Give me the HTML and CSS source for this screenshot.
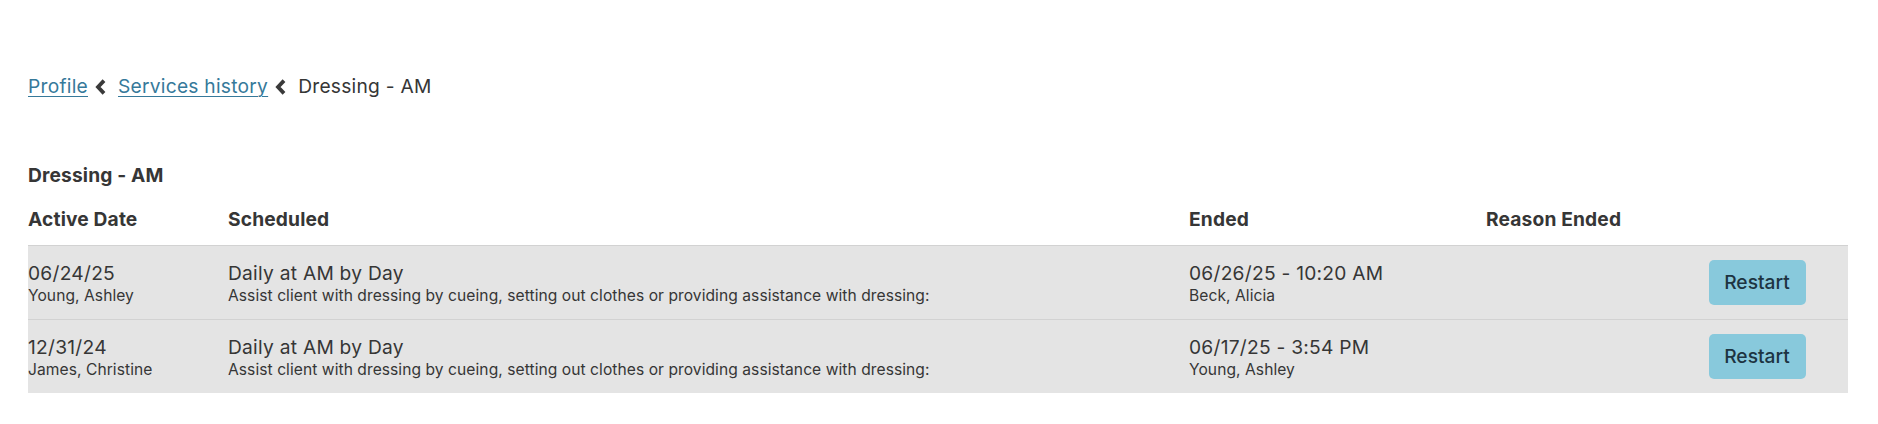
FILE: index.html
```html
<!DOCTYPE html>
<html lang="en">
<head>
<meta charset="utf-8">
<title>Dressing - AM</title>
<link rel="stylesheet" href="styles.css">
</head>
<body>
<div class="page">
  <nav class="crumbs">
    <a href="#" class="crumb-link">Profile</a>
    <svg class="chev" viewBox="0 0 11 16" width="11" height="16"><path d="M9 1.6 L3 8 L9 14.4"/></svg>
    <a href="#" class="crumb-link">Services history</a>
    <svg class="chev" viewBox="0 0 11 16" width="11" height="16"><path d="M9 1.6 L3 8 L9 14.4"/></svg>
    <span class="crumb-current">Dressing - AM</span>
  </nav>

  <h2 class="title">Dressing - AM</h2>

  <div class="table">
    <div class="row head">
      <div class="cell">Active Date</div>
      <div class="cell">Scheduled</div>
      <div class="cell">Ended</div>
      <div class="cell">Reason Ended</div>
      <div class="cell"></div>
    </div>
    <div class="row body">
      <div class="cell">
        <div class="main">06/24/25</div>
        <div class="sub">Young, Ashley</div>
      </div>
      <div class="cell">
        <div class="main">Daily at AM by Day</div>
        <div class="sub">Assist client with dressing by cueing, setting out clothes or providing assistance with dressing:</div>
      </div>
      <div class="cell">
        <div class="main">06/26/25 - 10:20 AM</div>
        <div class="sub">Beck, Alicia</div>
      </div>
      <div class="cell"></div>
      <div class="cell action"><button class="btn">Restart</button></div>
    </div>
    <div class="row body">
      <div class="cell">
        <div class="main">12/31/24</div>
        <div class="sub">James, Christine</div>
      </div>
      <div class="cell">
        <div class="main">Daily at AM by Day</div>
        <div class="sub">Assist client with dressing by cueing, setting out clothes or providing assistance with dressing:</div>
      </div>
      <div class="cell">
        <div class="main">06/17/25 - 3:54 PM</div>
        <div class="sub">Young, Ashley</div>
      </div>
      <div class="cell"></div>
      <div class="cell action"><button class="btn">Restart</button></div>
    </div>
  </div>
</div>
</body>
</html>
```
FILE: styles.css
```css
html, body {
  margin: 0;
  padding: 0;
  background: #ffffff;
}

body {
  font-family: Inter, "Noto Sans", "Liberation Sans", sans-serif;
  color: #363636;
  font-size: 19.2px;
  line-height: 23px;
}

.page {
  padding: 75px 30px 0 28px;
}

.crumbs {
  display: flex;
  align-items: center;
  height: 23px;
  letter-spacing: 0.25px;
}

.crumb-link {
  color: #36799a;
  text-decoration: underline;
  text-underline-offset: 3px;
  text-decoration-thickness: 1px;
}

.crumb-current {
  color: #363636;
}

.chev {
  margin: 0 12px 0 7px;
  fill: none;
  stroke: #3a3a3a;
  stroke-width: 3.8;
  stroke-linejoin: miter;
  stroke-linecap: butt;
}

.title {
  margin: 66px 0 0 0;
  font-size: 19.2px;
  line-height: 23px;
  font-weight: 700;
  color: #363636;
  letter-spacing: 0.15px;
}

.table {
  margin-top: 21px;
}

.row {
  display: grid;
  grid-template-columns: 200px 961px 297px 180px 1fr;
}

.row.head {
  font-weight: 700;
  padding-bottom: 14px;
  border-bottom: 1px solid #d2d2d2;
  letter-spacing: 0.15px;
}

.row.body {
  background: #e4e4e4;
  padding: 14px 0;
  align-items: center;
}

.row.body + .row.body {
  border-top: 1px solid #d2d2d2;
}

.main {
  line-height: 25px;
  font-size: 19.2px;
  letter-spacing: 0.25px;
}

.sub {
  font-size: 15.6px;
  line-height: 19px;
  letter-spacing: 0.06px;
}

.action {
  display: flex;
  justify-content: center;
}

.btn {
  font-family: Inter, "Noto Sans", "Liberation Sans", sans-serif;
  font-size: 19.2px;
  font-weight: 500;
  line-height: 23px;
  color: #1d3442;
  background: #88c9dc;
  border: none;
  border-radius: 5px;
  padding: 11px 0;
  width: 97px;
  cursor: pointer;
}
```
